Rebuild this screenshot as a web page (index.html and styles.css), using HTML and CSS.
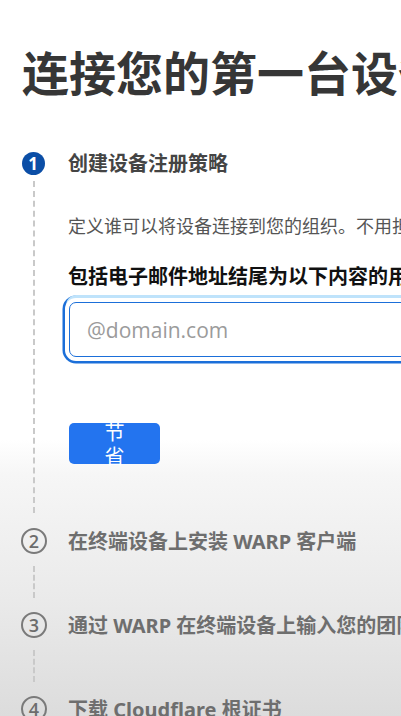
FILE: index.html
```
<!DOCTYPE html>
<html lang="zh-CN">
<head>
<meta charset="utf-8">
<title>连接您的第一台设备</title>
<link rel="stylesheet" href="styles.css">
</head>
<body>
<main class="page">
  <h1 class="title">连接您的第一台设备</h1>
  <ol class="steps">
    <li class="step step-first">
      <div class="rail">
        <span class="marker marker-active">1</span>
        <span class="line line-long"></span>
      </div>
      <div class="content">
        <h2 class="step-title step-title-active">创建设备注册策略</h2>
        <div class="step-body">
          <p class="desc">定义谁可以将设备连接到您的组织。不用担心，您以后可以随时更改此设置。</p>
          <label class="field-label" for="domain">包括电子邮件地址结尾为以下内容的用户：</label>
          <input class="field" id="domain" type="text" placeholder="@domain.com">
          <button class="save" type="button"><span class="save-text">节省</span></button>
        </div>
      </div>
    </li>
    <li class="step">
      <div class="rail">
        <span class="marker">2</span>
        <span class="line"></span>
      </div>
      <div class="content">
        <h2 class="step-title">在终端设备上安装 WARP 客户端</h2>
      </div>
    </li>
    <li class="step">
      <div class="rail">
        <span class="marker">3</span>
        <span class="line"></span>
      </div>
      <div class="content">
        <h2 class="step-title">通过 WARP 在终端设备上输入您的团队名称</h2>
      </div>
    </li>
    <li class="step">
      <div class="rail">
        <span class="marker">4</span>
        <span class="line"></span>
      </div>
      <div class="content">
        <h2 class="step-title">下载 Cloudflare 根证书</h2>
      </div>
    </li>
  </ol>
</main>
</body>
</html>
```
FILE: styles.css
```
html, body {
  margin: 0;
  padding: 0;
  height: 716px;
  overflow: hidden;
}
html {
  background: linear-gradient(to bottom, #ffffff 0, #ffffff 440px, #f6f6f6 475px, #eaeaea 600px, #dcdcdc 716px);
}
body {
  font-family: "Noto Sans", "Noto Sans CJK SC", sans-serif;
  color: #333;
}
.page {
  padding: 43px 0 0 22px;
  width: 700px;
}
.title {
  margin: 0;
  font-family: "Noto Sans CJK SC", sans-serif;
  font-size: 47px;
  line-height: 56px;
  font-weight: 700;
  color: #363636;
  white-space: nowrap;
}
.steps {
  list-style: none;
  margin: 51px 0 0;
  padding: 0;
}
.step {
  display: grid;
  grid-template-columns: 24px 1fr;
  column-gap: 22px;
}
.rail {
  display: flex;
  flex-direction: column;
  align-items: center;
}
.marker {
  box-sizing: border-box;
  flex: none;
  width: 26px;
  height: 26px;
  margin-top: 0;
  border: 2px solid #7a7a7a;
  border-radius: 50%;
  display: flex;
  align-items: center;
  justify-content: center;
  font-family: "Open Sans", "Noto Sans", sans-serif;
  font-size: 18px;
  font-weight: 600;
  color: #6c6c6c;
  line-height: 1;
}
.marker-active {
  width: 23px;
  height: 23px;
  margin-top: 2px;
  border: none;
  background: #0b4ea6;
  color: #fff;
  font-size: 17px;
  font-weight: 700;
  margin-left: -2px;
}
.line {
  width: 0;
  height: 32px;
  margin: 12px 0 14px;
  border-left: 2px dashed #c9c9c9;
}
.line-long {
  height: 332px;
  margin: 6px 0 15px;
}
.content {
  min-width: 0;
}
.step-title {
  margin: 0;
  height: 28px;
  font-family: "Noto Sans", "Noto Sans CJK SC", sans-serif;
  font-size: 20px;
  line-height: 28px;
  font-weight: 700;
  color: #6e6e6e;
  white-space: nowrap;
}
.step-title-active {
  color: #444;
}
.step-body {
  display: flex;
  flex-direction: column;
  align-items: flex-start;
  padding-top: 35px;
}
.desc {
  margin: 0;
  font-family: "Noto Sans CJK SC", sans-serif;
  font-size: 18px;
  line-height: 24px;
  color: #555;
  white-space: nowrap;
}
.field-label {
  margin-top: 25px;
  font-family: "Noto Sans CJK SC", sans-serif;
  font-size: 20px;
  line-height: 28px;
  font-weight: 700;
  color: #111;
  white-space: nowrap;
}
.field {
  box-sizing: border-box;
  margin: 12px 0 0 1px;
  width: 520px;
  height: 55px;
  padding: 0 0 0 17px;
  border: 1.5px solid #1b6fd9;
  border-radius: 7px;
  box-shadow: 0 0 0 4px #ffffff, 0 -4px 0 3px #bfe3fb, 0 0 0 6.5px #1b6fd9;
  font-family: "Open Sans", "Noto Sans", sans-serif;
  font-size: 21px;
  color: #333;
  background: #fff;
  outline: none;
}
.field::placeholder {
  color: #9b9b9b;
}
.save {
  margin: 66px 0 0 1px;
  width: 91px;
  height: 41px;
  padding: 0;
  border: none;
  border-radius: 5px;
  background: #2374ef;
  display: flex;
  align-items: center;
  justify-content: center;
  overflow: visible;
}
.save-text {
  width: 1em;
  font-family: "Noto Sans CJK SC", sans-serif;
  font-size: 20px;
  line-height: 24px;
  color: #fff;
  text-align: center;
}
```
